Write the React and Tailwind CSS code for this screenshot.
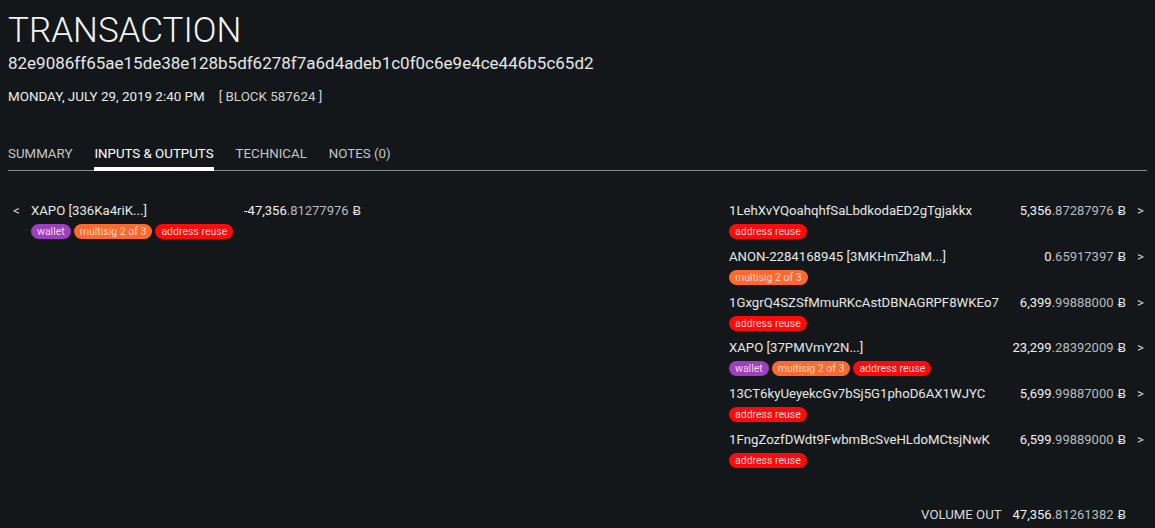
import React from "react";

const tagColors = {
  wallet: "bg-[#9c3fc0]",
  multisig: "bg-[#ff6a2c]",
  reuse: "bg-[#ff0a0a]",
};

const Tag = ({ kind, children }) => (
  <span
    className={`${tagColors[kind]} text-[#f3d9d9] text-[10.5px] leading-[15px] h-[15px] px-[6px] rounded-full whitespace-nowrap`}
  >
    {children}
  </span>
);

const Amount = ({ value }) => {
  const [whole, frac] = value.split(".");
  return (
    <span className="whitespace-nowrap text-[13px]">
      <span className="text-[#f2f2f2]">{whole}</span>
      <span className="text-[#b9bcbe]">.{frac}</span>
      <span className="text-[#e6e6e6] ml-[4px]">Ƀ</span>
    </span>
  );
};

const outputs = [
  { addr: "1LehXvYQoahqhfSaLbdkodaED2gTgjakkx", amount: "5,356.87287976", tags: ["reuse"] },
  { addr: "ANON-2284168945 [3MKHmZhaM...]", amount: "0.65917397", tags: ["multisig"] },
  { addr: "1GxgrQ4SZSfMmuRKcAstDBNAGRPF8WKEo7", amount: "6,399.99888000", tags: ["reuse"] },
  { addr: "XAPO [37PMVmY2N...]", amount: "23,299.28392009", tags: ["wallet", "multisig", "reuse"] },
  { addr: "13CT6kyUeyekcGv7bSj5G1phoD6AX1WJYC", amount: "5,699.99887000", tags: ["reuse"] },
  { addr: "1FngZozfDWdt9FwbmBcSveHLdoMCtsjNwK", amount: "6,599.99889000", tags: ["reuse"] },
];

const tagLabel = { wallet: "wallet", multisig: "multisig 2 of 3", reuse: "address reuse" };

const Tags = ({ tags }) => (
  <div className="flex gap-[3px] mt-[5px]">
    {tags.map((t) => (
      <Tag key={t} kind={t}>
        {tagLabel[t]}
      </Tag>
    ))}
  </div>
);

export default function App() {
  const tabs = ["SUMMARY", "INPUTS & OUTPUTS", "TECHNICAL", "NOTES (0)"];
  return (
    <div
      className="min-h-[528px] bg-[#131719] text-[#e9eaea] px-[8px] overflow-hidden"
      style={{ fontFamily: "Roboto, 'Noto Sans', sans-serif" }}
    >
      {/* Header */}
      <h1 className="text-[35px] font-light leading-[42px] pt-[10px] text-[#f4f4f4]">TRANSACTION</h1>
      <div className="text-[17px] leading-[22px] text-[#e6e7e7]">
        82e9086ff65ae15de38e128b5df6278f7a6d4adeb1c0f0c6e9e4ce446b5c65d2
      </div>
      <div className="flex items-center text-[13.4px] leading-[16px] mt-[15px] text-[#ececec]">
        <span>MONDAY, JULY 29, 2019 2:40 PM</span>
        <span className="ml-[14px] text-[#cfd1d1]">[ BLOCK 587624 ]</span>
      </div>

      {/* Tabs */}
      <div className="flex gap-[22px] mt-[41px] border-b border-[#8a8d8f] text-[13.3px]">
        {tabs.map((t, i) => (
          <div
            key={t}
            className={`pb-[5px] leading-[16px] border-b-[4px] mb-[-1px] ${
              i === 1 ? "border-white text-white" : "border-transparent text-[#c4c6c7]"
            }`}
          >
            {t}
          </div>
        ))}
      </div>

      {/* Inputs & outputs */}
      <div className="flex justify-between mt-[31px] text-[13.2px] leading-[17px]">
        <div className="flex items-start">
          <span className="w-[23px] pl-[5px] text-[#d6d6d6]">&lt;</span>
          <div className="w-[213px]">
            <div className="text-[#e6e7e7]">XAPO [336Ka4riK...]</div>
            <Tags tags={["wallet", "multisig", "reuse"]} />
          </div>
          <Amount value="-47,356.81277976" />
        </div>

        <div className="w-[418px] flex flex-col">
          {outputs.map((o) => (
            <div key={o.addr} className="flex items-start h-[45.8px]">
              <div className="flex-1">
                <div className="text-[#e6e7e7]">{o.addr}</div>
                <Tags tags={o.tags} />
              </div>
              <Amount value={o.amount} />
              <span className="w-[21px] pr-[3px] text-right text-[#d6d6d6]">&gt;</span>
            </div>
          ))}
          <div className="flex justify-end items-center mt-[29px] pr-[21px]">
            <span className="text-[#d9dada] mr-[11px]">VOLUME OUT</span>
            <Amount value="47,356.81261382" />
          </div>
        </div>
      </div>
    </div>
  );
}
